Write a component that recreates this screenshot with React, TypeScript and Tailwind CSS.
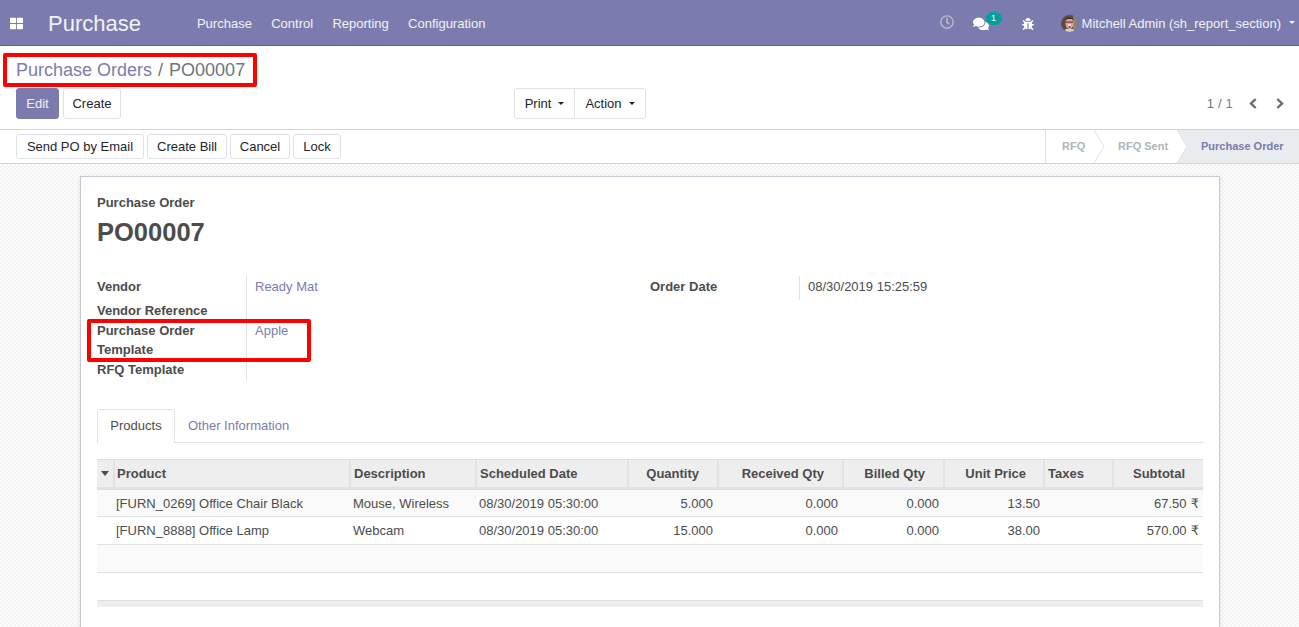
import { FaBug, FaComments, FaRegClock, FaThLarge } from "react-icons/fa";

const cols = "grid grid-cols-[16px_236px_126px_152px_90px_125px_101px_100px_69px_91px]";

const headers = [
  { label: "Product", cls: "pl-[2px]" },
  { label: "Description", cls: "pl-[3px]" },
  { label: "Scheduled Date", cls: "pl-[3px]" },
  { label: "Quantity", cls: "justify-end pr-[18px]" },
  { label: "Received Qty", cls: "justify-end pr-[18px]" },
  { label: "Billed Qty", cls: "justify-end pr-[18px]" },
  { label: "Unit Price", cls: "justify-end pr-[17px]" },
  { label: "Taxes", cls: "pl-[3px]" },
  { label: "Subtotal", cls: "justify-end pr-[18px]" },
];

const rows = [
  ["[FURN_0269] Office Chair Black", "Mouse, Wireless", "08/30/2019 05:30:00", "5.000", "0.000", "0.000", "13.50", "", "67.50"],
  ["[FURN_8888] Office Lamp", "Webcam", "08/30/2019 05:30:00", "15.000", "0.000", "0.000", "38.00", "", "570.00"],
];

function Btn({ children, className = "" }: { children: React.ReactNode; className?: string }) {
  return (
    <button className={`h-[25px] bg-white border border-[#dee2e6] rounded-[3px] text-[#212529] text-[13px] ${className}`}>
      {children}
    </button>
  );
}

function Caret({ className = "ml-[7px]" }: { className?: string }) {
  return <span className={`inline-block mb-[2px] border-x-[3px] border-x-transparent border-t-[3px] border-t-current align-middle ${className}`} />;
}

function Arrow() {
  return (
    <svg className="absolute right-[-10px] top-0 z-10" width="11" height="33" viewBox="0 0 11 33" fill="none">
      <path d="M0 0L10 16.5L0 33" stroke="#dee2e6" fill="#fff" />
    </svg>
  );
}

function Chevron({ dir, className = "" }: { dir: "left" | "right"; className?: string }) {
  return (
    <svg className={className} width="8" height="11" viewBox="0 0 8 11" fill="none" stroke="#666c74" strokeWidth="2.4">
      <path d={dir === "left" ? "M6.7 1L2 5.5L6.7 10" : "M1.3 1L6 5.5L1.3 10"} />
    </svg>
  );
}

function Avatar() {
  return (
    <svg width="17" height="17" viewBox="0 0 17 17">
      <defs>
        <clipPath id="av"><circle cx="8.5" cy="8.5" r="8.5" /></clipPath>
      </defs>
      <g clipPath="url(#av)">
        <rect width="17" height="17" fill="#5c4c40" />
        <rect x="12" width="5" height="17" fill="#8f8478" />
        <ellipse cx="8.5" cy="8.5" rx="4" ry="5.5" fill="#d1a898" />
        <path d="M3.5 5C5 1.5 12 1.5 13.5 5L11 4H6Z" fill="#3a2c22" />
        <rect x="5" y="6.5" width="7" height="1.2" fill="#7a3a36" />
        <path d="M7 9H10V13H7Z" fill="#e6d8d2" />
        <path d="M7.5 11H9.5V13H7.5Z" fill="#a03a3a" />
        <path d="M2 17L5 14H12L15 17Z" fill="#d8d2cc" />
      </g>
    </svg>
  );
}

export default function App() {
  return (
    <div className="relative h-[627px] overflow-hidden flex flex-col bg-white text-[13px] text-[#4c4c4c] font-['Liberation_Sans',Arial,sans-serif]">
      {/* Navbar */}
      <header className="h-[46px] shrink-0 flex items-center pt-[2px] bg-[#7c7bad] border-b border-[#5f5e97] text-white/90">
        <FaThLarge size={13} className="ml-[10px] text-white" />
        <span className="ml-[25px] text-[22px] leading-none">Purchase</span>
        <nav className="ml-[56px] flex gap-[19.3px]">
          <span>Purchase</span>
          <span>Control</span>
          <span>Reporting</span>
          <span>Configuration</span>
        </nav>
        <div className="ml-auto flex items-center">
          <FaRegClock size={14} className="-mt-[3px] text-white/50" />
          <div className="relative ml-[19px]">
            <FaComments size={16} className="text-white" />
            <span className="absolute -top-[4px] left-[13px] h-[13px] w-[16px] rounded-full bg-[#00a09d] text-white text-[9px] leading-[13px] text-center">1</span>
          </div>
          <FaBug size={12} className="ml-[33px] text-white" />
          <div className="ml-[27px] mr-[4px] flex items-center">
            <Avatar />
            <span className="ml-1">Mitchell Admin (sh_report_section)</span>
            <Caret className="ml-[8px]" />
          </div>
        </div>
      </header>

      {/* Control panel */}
      <div className="h-[84px] shrink-0 border-b border-[#ced4da] px-4">
        <div className="h-[42px] flex items-end text-[18px] leading-[27px] pb-[4px]">
          <span className="text-[#7c7bad]">Purchase Orders</span>
          <span className="mx-[6px] text-[#6c757d]">/</span>
          <span className="text-[#6c757d]">PO00007</span>
        </div>
        <div className="grid grid-cols-[498px_auto_1fr] items-start">
          <div className="flex gap-1">
            <button className="h-[31px] w-[43px] bg-[#7c7bad] border border-[#7c7bad] rounded-[3px] text-white/90">Edit</button>
            <button className="h-[31px] w-[58px] bg-white border border-[#dee2e6] rounded-[3px] text-[#212529]">Create</button>
          </div>
          <div className="flex h-[31px] border border-[#dee2e6] rounded-[3px] text-[#212529]">
            <button className="w-[60px] border-r border-[#dee2e6]">Print<Caret /></button>
            <button className="w-[70px]">Action<Caret /></button>
          </div>
          <div className="h-[31px] flex items-center justify-end text-[#6c757d]">
            <span className="tracking-[0.2px]">1 / <span className="text-[#7c7bad]">1</span></span>
            <Chevron dir="left" className="ml-[16px]" />
            <Chevron dir="right" className="ml-[19px] mr-[-1px]" />
          </div>
        </div>
      </div>

      {/* Status bar */}
      <div className="h-[34px] shrink-0 flex justify-between border-b border-[#ced4da] pl-4">
        <div className="flex items-center gap-[3px]">
          <Btn className="w-[128px]">Send PO by Email</Btn>
          <Btn className="w-[80px]">Create Bill</Btn>
          <Btn className="w-[60px]">Cancel</Btn>
          <Btn className="w-[48px]">Lock</Btn>
        </div>
        <div className="flex text-[11px] font-bold text-[#adb5bd] border-l border-[#dee2e6]">
          <div className="relative w-[49px] pl-[16px] leading-[33px]">RFQ<Arrow /></div>
          <div className="relative w-[83px] pl-[23px] leading-[33px]">RFQ Sent<Arrow /></div>
          <div className="w-[121px] pl-[23px] leading-[33px] bg-[#e9ecef] text-[#7c7bad]">Purchase Order</div>
        </div>
      </div>

      {/* Form sheet */}
      <main className="flex-1 min-h-0 px-20 pt-[12px] bg-[repeating-conic-gradient(#f3f3f3_0_25%,#fcfcfc_0_50%)] bg-[length:4px_4px]">
        <div className="h-full w-[1140px] bg-white border border-b-0 border-[#c8c8d3] shadow-[0_1px_4px_rgba(0,0,0,0.1)] px-4 pt-4">
          <div className="font-bold leading-[19.5px]">Purchase Order</div>
          <h1 className="text-[25.5px] leading-[39px] font-bold">PO00007</h1>

          <div className="mt-[24px] flex">
            <div className="w-[553px] grid grid-cols-[149px_1fr] font-bold leading-[19.5px]">
              <div className="h-[25px] pt-[1px]">Vendor</div>
              <div className="h-[25px] pt-[1px] pl-2 border-l border-[#dee2e6] font-normal text-[#7c7bad]">Ready Mat</div>
              <div className="h-[20.5px]">Vendor Reference</div>
              <div className="pl-2 border-l border-[#dee2e6]" />
              <div className="h-[39px] leading-[19px]">Purchase Order<br />Template</div>
              <div className="pl-2 border-l border-[#dee2e6] font-normal text-[#7c7bad]">Apple</div>
              <div>RFQ Template</div>
              <div className="pl-2 border-l border-[#dee2e6]" />
            </div>
            <div className="grid grid-cols-[149px_1fr] h-[24px] leading-[19.5px]">
              <div className="pt-[1px] font-bold">Order Date</div>
              <div className="pt-[1px] pl-2 border-l border-[#dee2e6]">08/30/2019 15:25:59</div>
            </div>
          </div>

          {/* Tabs */}
          <div className="mt-[29px] flex h-[34px] border-b border-[#dee2e6]">
            <div className="h-[34px] w-[78px] bg-white border border-b-0 border-[#dee2e6] rounded-t-[3px] text-center leading-[32px]">Products</div>
            <div className="ml-[13px] leading-[33px] text-[#7c7bad]">Other Information</div>
          </div>

          {/* Lines table */}
          <div className="mt-[16px]">
            <div className={`${cols} h-[31px] bg-[#eeeeee] border-t border-[#dfdfdf] border-b-[3px] border-b-[#dee2e6] font-bold`}>
              <div className="flex items-center justify-center">
                <span className="border-x-[4px] border-x-transparent border-t-[5px] border-t-[#4c4c4c]" />
              </div>
              {headers.map((h) => (
                <div key={h.label} className={`flex items-center pt-[1px] border-l-2 border-[#e2e2e2] ${h.cls}`}>{h.label}</div>
              ))}
            </div>
            {rows.map((r, i) => (
              <div key={i} className={`${cols} items-center border-b border-[#dee2e6] ${i === 0 ? "h-[27px] pt-[2px] bg-[#fafafa]" : "h-[28px] pt-[1px] bg-white"}`}>
                <div />
                {r.map((c, j) => (
                  <div key={j} className={j === 0 ? "pl-[3px]" : j < 3 ? "pl-[4px]" : j === 6 ? "text-right pr-[3px]" : "text-right pr-1"}>
                    {c}
                    {j === 8 && <span className="font-['DejaVu_Sans',sans-serif]"> ₹</span>}
                  </div>
                ))}
              </div>
            ))}
            <div className="h-[28px] bg-[#fafafa] border-b border-[#dee2e6]" />
            <div className="h-[28px] border-b border-[#dee2e6]" />
            <div className="h-[6px] bg-[#eeeeee]" />
          </div>
        </div>
      </main>

      {/* Red annotation boxes */}
      <div className="absolute left-[3px] top-[53px] w-[254px] h-[34px] border-4 border-[#ff0000] rounded-[2px]" />
      <div className="absolute left-[87px] top-[319px] w-[224px] h-[43px] border-4 border-[#ff0000] rounded-[2px]" />
    </div>
  );
}
